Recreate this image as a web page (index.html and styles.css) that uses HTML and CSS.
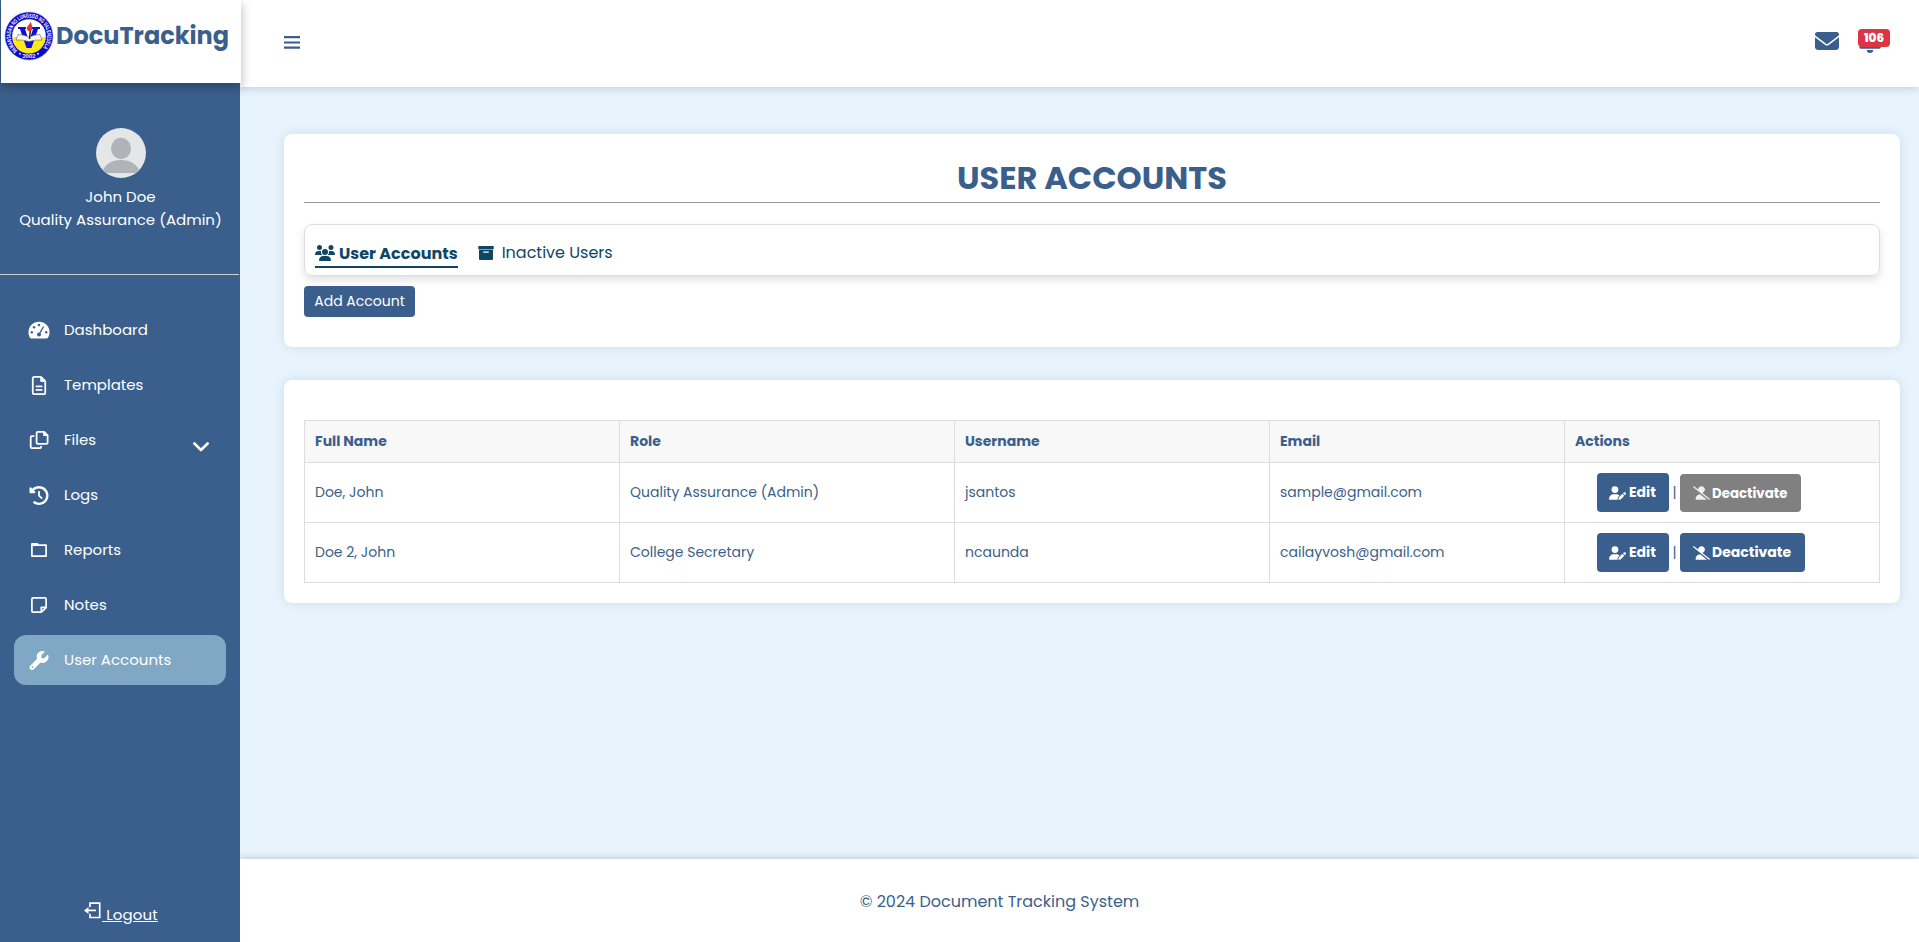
FILE: index.html
```html
<!DOCTYPE html>
<html lang="en">
<head>
<meta charset="utf-8">
<title>DocuTracking - User Accounts</title>
<link rel="stylesheet" href="styles.css">
</head>
<body>
<svg class="defs" aria-hidden="true">
  <symbol id="user-pen" viewBox="0 0 640 512"><path d="M224 256A128 128 0 1 0 224 0a128 128 0 1 0 0 256zm-45.700 48C79.800 304 0 383.800 0 482.300C0 498.700 13.300 512 29.700 512H322.800c-3.100-8.800-3.700-18.400-1.400-27.800l15-60.100c2.800-11.300 8.600-21.500 16.800-29.700l40.300-40.300c-32.100-31-75.700-50.100-123.900-50.100H178.300zm435.500-68.300c-15.600-15.600-40.900-15.600-56.600 0l-29.400 29.400 71 71 29.400-29.400c15.600-15.600 15.600-40.900 0-56.600l-14.400-14.400zM375.900 417c-4.100 4.100-7 9.200-8.400 14.900l-15 60.100c-1.400 5.500 .2 11.200 4.200 15.200s9.700 5.600 15.200 4.200l60.100-15c5.600-1.400 10.800-4.300 14.900-8.400L576.100 358.700l-71-71L375.900 417z"/></symbol>
  <symbol id="user-slash" viewBox="0 0 640 512"><path d="M38.800 5.100C28.400-3.100 13.300-1.200 5.100 9.200S-1.200 34.700 9.200 42.900l592 464c10.400 8.200 25.500 6.300 33.700-4.100s6.300-25.500-4.100-33.700L353.300 251.600C407.900 237 448 187.200 448 128C448 57.300 390.700 0 320 0C250.200 0 193.500 55.800 192 125.200L38.800 5.100zM264.300 304.300C170.500 309.400 96 387.200 96 482.300c0 16.400 13.300 29.700 29.700 29.700H514.300c3.900 0 7.600-.7 11-2.100l-261-205.600z"/></symbol>
</svg>
<div class="app">
  <aside class="sidebar">
    <div class="brand">
      <svg class="seal" viewBox="0 0 50 50">
        <circle cx="25" cy="25" r="24.500" fill="#c9cbd6"/>
        <circle cx="25" cy="25" r="23.800" fill="#0b0bd0"/>
        <path id="ring" d="M13.600 39.300A18.300 18.300 0 1 1 36.400 39.300" fill="none"/>
        <text class="seal-ring"><textPath href="#ring" textLength="86" lengthAdjust="spacingAndGlyphs">PAMANTASAN NG LUNGSOD NG VALENZUELA</textPath></text>
        <circle cx="25" cy="25" r="16.800" fill="#fff"/>
        <path d="M8.500 26a16.500 16.500 0 0 0 33 0z" fill="#ffe81a"/>
        <path d="M14 16h8v2h-1l4 12 4-12h-1v-2h8v2h-2l-6.500 19h-5L16 18h-2z" fill="#1010d0"/>
        <path d="M14 23.500q6 0 11 2.500 5-2.500 11-2.500l2 5.500q-7-.5-13 1.500-6-2-13-1.500z" fill="#f8f7ea" stroke="#666" stroke-width=".6"/>
        <path d="M25.500 28l1-10" stroke="#222" stroke-width="1.500"/>
        <path d="M23 18.500c-1-3 2-4 4-8 0 3 2 4 1 8-1 2-4 2-5 0z" fill="#e33b22"/>
        <circle cx="16" cy="42.800" r="1" fill="#fff04a"/><circle cx="34" cy="42.800" r="1" fill="#fff04a"/>
        <text x="25" y="47" class="seal-year">2002</text>
      </svg>
      <span class="brand-name">DocuTracking</span>
    </div>
    <div class="profile">
      <svg class="avatar" viewBox="0 0 50 50"><clipPath id="round"><circle cx="25" cy="25" r="25"/></clipPath><g clip-path="url(#round)"><path fill="#e4e6e7" d="M0 0h50v50H0z"/><ellipse cx="25" cy="20.500" rx="10" ry="10.700" fill="#aeb4b8"/><path fill="#aeb4b8" d="M6 45c2-9 10-13 19-13s17 4 19 13z"/></g></svg>
      <div>John Doe</div>
      <div>Quality Assurance (Admin)</div>
    </div>
    <nav class="nav">
      <a class="item"><svg viewBox="0 0 22 18"><path fill="#fff" d="M11 .8C5.200.8.500 5.500.500 11.200c0 1.900.5 3.700 1.400 5.200.4.600 1 1 1.700 1h14.800c.7 0 1.300-.4 1.700-1 .9-1.500 1.400-3.300 1.400-5.200C21.500 5.500 16.800.8 11 .8z"/><g fill="#3b5f8c"><circle cx="11" cy="4" r="1.200"/><circle cx="6" cy="6.200" r="1.200"/><circle cx="3.800" cy="11.200" r="1.200"/><circle cx="18.200" cy="11.200" r="1.200"/><circle cx="11" cy="13.500" r="2"/></g><path d="M11.300 13L15.300 6" stroke="#3b5f8c" stroke-width="1.400" stroke-linecap="round"/></svg><span>Dashboard</span></a>
      <a class="item"><svg viewBox="-64 0 512 512" class="fa"><path fill="#fff" d="M64 464c-8.800 0-16-7.200-16-16V64c0-8.800 7.200-16 16-16H224v80c0 17.700 14.300 32 32 32h80V448c0 8.800-7.200 16-16 16H64zM64 0C28.700 0 0 28.700 0 64V448c0 35.300 28.700 64 64 64H320c35.300 0 64-28.700 64-64V154.500c0-17-6.700-33.300-18.700-45.300L274.700 18.700C262.700 6.700 246.500 0 229.500 0H64zm56 256c-13.300 0-24 10.700-24 24s10.700 24 24 24H264c13.300 0 24-10.700 24-24s-10.700-24-24-24H120zm0 96c-13.300 0-24 10.700-24 24s10.700 24 24 24H264c13.300 0 24-10.700 24-24s-10.700-24-24-24H120z"/></svg><span>Templates</span></a>
      <a class="item"><svg viewBox="0 0 22 20"><g fill="none" stroke="#fff" stroke-width="1.800" stroke-linejoin="round"><path d="M9.800 1.900h6.400l3.400 3.400v7.400q0 1.200-1.200 1.200H9.800q-1.200 0-1.200-1.200V3.100q0-1.200 1.200-1.200z"/><path d="M6.300 6.200H3.900q-1.200 0-1.200 1.200v9.500q0 1.200 1.200 1.200h8q1.200 0 1.200-1.200v-.8"/></g><path fill="#fff" d="M15.200 1.500v4.600h4.700z"/></svg><span>Files</span><svg class="chev" viewBox="0 0 16 10"><path d="M1.400 1.500L8 8l6.600-6.500" fill="none" stroke="#fff" stroke-width="2.600" stroke-linecap="round" stroke-linejoin="round"/></svg></a>
      <a class="item"><svg viewBox="0 0 512 512" class="fa"><path fill="#fff" d="M75 75L41 41C25.900 25.900 0 36.600 0 57.900V168c0 13.300 10.700 24 24 24H134.100c21.400 0 32.100-25.900 17-41l-30.800-30.800C155 85.500 203 64 256 64c106 0 192 86 192 192s-86 192-192 192c-40.800 0-78.600-12.700-109.700-34.400c-14.500-10.100-34.400-6.600-44.600 7.900s-6.600 34.400 7.900 44.600C151.200 495 201.700 512 256 512c141.400 0 256-114.600 256-256S397.400 0 256 0C185.300 0 121.300 28.700 75 75zm181 53c-13.300 0-24 10.700-24 24V256c0 6.400 2.500 12.500 7 17l72 72c9.400 9.400 24.600 9.400 33.900 0s9.400-24.600 0-33.900l-65-65V152c0-13.300-10.700-24-24-24z"/></svg><span>Logs</span></a>
      <a class="item"><svg viewBox="0 0 22 20"><path d="M3.900 5.100v11h14.200V5.100zM3.900 5.100V3.900h5.400l1.200 1.200" fill="none" stroke="#fff" stroke-width="1.700" stroke-linejoin="round"/></svg><span>Reports</span></a>
      <a class="item"><svg viewBox="0 0 22 20"><path d="M5 2.900h12q1.100 0 1.100 1.100v8.700l-4.700 4.500H5q-1.100 0-1.100-1.100V4q0-1.100 1.100-1.100zM18 12.300h-4.700v4.700" fill="none" stroke="#fff" stroke-width="1.700" stroke-linejoin="round"/></svg><span>Notes</span></a>
      <a class="item active"><svg viewBox="0 0 512 512" class="fa"><path fill="#fff" d="M352 320c88.400 0 160-71.600 160-160c0-15.300-2.200-30.100-6.200-44.200c-3.100-10.800-16.400-13.200-24.300-5.300l-76.800 76.800c-3 3-7.100 4.700-11.300 4.700H336c-8.800 0-16-7.200-16-16V118.600c0-4.200 1.700-8.300 4.700-11.300l76.800-76.800c7.900-7.900 5.400-21.200-5.300-24.300C382.100 2.200 367.300 0 352 0C263.600 0 192 71.600 192 160c0 19.100 3.400 37.500 9.500 54.500L19.900 396.100C7.200 408.800 0 426.100 0 444.100C0 481.600 30.400 512 67.900 512c18 0 35.300-7.200 48-19.900L297.500 310.500c17 6.200 35.400 9.500 54.500 9.500zM80 408a24 24 0 1 1 0 48 24 24 0 1 1 0-48z"/></svg><span>User Accounts</span></a>
    </nav>
    <a class="logout"><svg viewBox="0 0 17 17"><path d="M6 5V1.200h9.700v14.300H6v-3.700" fill="none" stroke="#fff" stroke-width="1.700"/><path d="M4 8.400h8" stroke="#fff" stroke-width="1.700"/><path fill="#fff" d="M0 8.400l4.500-3.500v7z"/></svg><span class="logout-text">&nbsp;Logout</span></a>
  </aside>
  <div class="page">
    <header class="topbar">
      <svg class="menu" viewBox="0 0 16 14"><path d="M0 2.200h16M0 7.500h16M0 12.700h16" stroke="#3b5f8c" stroke-width="2.200"/></svg>
      <div class="tools">
        <svg class="mail" viewBox="0 64 512 384" preserveAspectRatio="none"><path fill="#3b5f8c" d="M48 64C21.500 64 0 85.500 0 112c0 15.100 7.100 29.300 19.200 38.400L236.800 313.600c11.400 8.500 27 8.500 38.400 0L492.800 150.400c12.100-9.100 19.200-23.300 19.200-38.400c0-26.500-21.500-48-48-48H48zM0 176V384c0 35.300 28.700 64 64 64H448c35.300 0 64-28.700 64-64V176L294.400 339.200c-22.800 17.100-54 17.100-76.800 0L0 176z"/></svg>
        <div class="alerts">
          <svg viewBox="0 0 22 24"><path fill="#3b5f8c" d="M11 0c1 0 1.500.7 1.500 1.600C16 2.300 18.300 5 18.300 9c0 4.500 1 6.500 3 8.500.9 1 .4 2.300-.9 2.300H1.600C.3 19.800-.2 18.500.7 17.500c2-2 3-4 3-8.500 0-4 2.300-6.700 5.800-7.400C9.500.7 10 0 11 0zM7.800 21h6.400a3.200 3 0 0 1-6.400 0z"/></svg>
          <span class="badge">106</span>
        </div>
      </div>
    </header>
    <main class="content">
      <section class="card intro">
        <h1>USER ACCOUNTS</h1>
        <div class="tabs">
          <a class="tab current"><svg viewBox="0 0 640 512"><path d="M144 0a80 80 0 1 1 0 160A80 80 0 1 1 144 0zM512 0a80 80 0 1 1 0 160A80 80 0 1 1 512 0zM0 298.700C0 239.800 47.800 192 106.700 192h42.700c15.900 0 31 3.500 44.600 9.700c-1.300 7.200-1.900 14.700-1.900 22.300c0 38.200 16.800 72.500 43.300 96H21.300C9.600 320 0 310.400 0 298.700zM404.600 320c26.600-23.500 43.300-57.800 43.300-96c0-7.600-.7-15-1.900-22.300c13.600-6.300 28.700-9.700 44.600-9.700h42.700C592.200 192 640 239.800 640 298.700c0 11.800-9.600 21.300-21.300 21.300H404.600zM224 224a96 96 0 1 1 192 0 96 96 0 1 1 -192 0zM128 485.300C128 411.700 187.700 352 261.300 352H378.700C452.300 352 512 411.700 512 485.300c0 14.700-11.900 26.700-26.700 26.700H154.700c-14.700 0-26.700-11.900-26.700-26.700z"/></svg><span>User Accounts</span></a>
          <a class="tab"><svg viewBox="0 0 16 16"><path fill-rule="evenodd" d="M.3 1h15.400v3.200H.3zM1 4.700h14V14q0 1-1 1H2q-1 0-1-1zM5.200 6.500v1.300h5.600V6.500z"/></svg><span>Inactive Users</span></a>
        </div>
        <button class="add">Add Account</button>
      </section>
      <section class="card list">
        <table>
          <colgroup><col class="c-name"><col class="c-role"><col class="c-user"><col class="c-mail"><col></colgroup>
          <thead><tr><th>Full Name</th><th>Role</th><th>Username</th><th>Email</th><th>Actions</th></tr></thead>
          <tbody>
            <tr><td>Doe, John</td><td>Quality Assurance (Admin)</td><td>jsantos</td><td>sample@gmail.com</td>
              <td><div class="actions"><a class="btn edit"><svg><use href="#user-pen"/></svg>Edit</a><span class="bar">|</span><a class="btn off disabled"><svg><use href="#user-slash"/></svg>Deactivate</a></div></td></tr>
            <tr><td>Doe 2, John</td><td>College Secretary</td><td>ncaunda</td><td>cailayvosh@gmail.com</td>
              <td><div class="actions"><a class="btn edit"><svg><use href="#user-pen"/></svg>Edit</a><span class="bar">|</span><a class="btn off"><svg><use href="#user-slash"/></svg>Deactivate</a></div></td></tr>
          </tbody>
        </table>
      </section>
    </main>
    <footer class="footer">© 2024 Document Tracking System</footer>
  </div>
</div>
</body>
</html>
```
FILE: styles.css
```css
* { box-sizing: border-box; }
body {
  margin: 0;
  font: 16px/24px Poppins, Inter, sans-serif;
  color: #3b5f8c;
  background: #e7f4fd;
}
.defs { position: absolute; width: 0; height: 0; }
.app { display: flex; height: 942px; overflow: hidden; }

/* Sidebar */
.sidebar {
  position: relative;
  z-index: 2;
  width: 240px;
  flex: none;
  display: flex;
  flex-direction: column;
  background: #3b5f8c;
  color: #fff;
  font-size: 15px;
}
.brand {
  width: 240px;
  height: 83px;
  flex: none;
  margin-left: 1px;
  padding: 10px 0 0 3px;
  display: flex;
  align-items: flex-start;
  background: #fff;
  box-shadow: 0 4px 10px rgba(0, 0, 0, .3);
}
.seal { width: 50px; height: 50px; margin-top: 1px; flex: none; }
.seal-year { font: 700 5px Inter, sans-serif; fill: #fff; text-anchor: middle; }
.seal-ring { font: 700 6px "Liberation Sans", sans-serif; fill: #fff; }
.brand-name {
  margin: 8px 0 0 2px;
  font-size: 24px;
  line-height: 36px;
  font-weight: 700;
  color: #3b5f8c;
}
.profile {
  width: 239px;
  height: 192px;
  padding: 45px 0 0 2px;
  text-align: center;
  line-height: 23px;
  border-bottom: 1px solid #cfcfcf;
}
.avatar { display: block; width: 50px; height: 50px; margin: 0 auto 7px; }
.nav { padding: 30px 14px 0; display: flex; flex-direction: column; gap: 5px; }
.item {
  height: 50px;
  padding: 0 17px 0 14px;
  display: flex;
  align-items: center;
  border-radius: 12px;
}
.item svg { width: 22px; height: 20px; margin-right: 14px; flex: none; }
.item svg.fa { height: 19px; }
.item .chev { width: 16px; height: 10px; margin: 13px 0 0 auto; }
.active { background: #80a7c3; }
.logout { margin: auto 0 17px 84px; display: flex; height: 24px; }
.logout svg { width: 17px; height: 17px; margin: 1px 1px 0 0; }
.logout-text { text-decoration: underline; margin-top: 2px; letter-spacing: .15px; }

/* Page frame */
.page { flex: 1; min-width: 0; display: flex; flex-direction: column; }
.topbar {
  position: relative;
  height: 87px;
  flex: none;
  padding: 0 29px 0 44px;
  display: flex;
  justify-content: space-between;
  background: #fff;
  box-shadow: 0 2px 8px rgba(0, 0, 0, .14);
}
.menu { width: 16px; height: 14px; margin-top: 35px; }
.tools { display: flex; gap: 19px; }
.mail { width: 24px; height: 18px; margin-top: 32px; }
.alerts { position: relative; width: 32px; padding: 29px 0 0 1px; }
.alerts svg { display: block; width: 22px; height: 24px; }
.badge {
  position: absolute;
  left: 0;
  top: 29px;
  width: 32px;
  height: 18px;
  border-radius: 4px;
  background: #dc3545;
  color: #fff;
  font-size: 12px;
  line-height: 18px;
  font-weight: 800;
  text-align: center;
}
.content { flex: 1; padding: 47px 19px 0 44px; }
.card {
  padding: 0 20px;
  border-radius: 8px;
  background: #fff;
  box-shadow: 0 0 12px rgba(0, 0, 0, .1);
}
.intro { height: 213px; }
.list { height: 223px; margin-top: 33px; padding-top: 40px; }
h1 {
  margin: 0 0 21px;
  padding-top: 20px;
  height: 69px;
  font-size: 32px;
  line-height: 48px;
  font-weight: 700;
  text-align: center;
  border-bottom: 1px solid #999;
}
.tabs {
  height: 52px;
  padding: 15px 10px 0;
  display: flex;
  align-items: flex-start;
  gap: 20px;
  color: #0f4665;
  border: 1px solid #ddd;
  border-radius: 8px;
  box-shadow: 0 4px 8px rgba(0, 0, 0, .12);
}
.tab { display: flex; }
.tab svg { width: 16px; height: 16px; margin: 5px 8px 0 0; fill: #0f4665; }
.tab span { margin-top: 1px; }
.current { height: 28px; font-weight: 700; border-bottom: 2px solid #0f4665; }
.current svg { width: 20px; margin-right: 4px; }
.current span { margin-top: 2px; }
.add {
  display: block;
  width: 111px;
  height: 31px;
  margin-top: 10px;
  padding: 0 0 1px;
  border: 0;
  border-radius: 4px;
  background: #3b5f8c;
  color: #fff;
  font: 14px/30px Poppins, Inter, sans-serif;
}

/* Accounts table */
table {
  width: 1576px;
  table-layout: fixed;
  border-collapse: collapse;
  font-size: 14px;
  line-height: 21px;
}
.c-name { width: 315px; }
.c-role { width: 335px; }
.c-user { width: 315px; }
.c-mail { width: 295px; }
th, td { padding: 0 10px; border: 1px solid #ddd; text-align: left; }
th { height: 42px; background: #f8f8f8; font-weight: 700; }
td { height: 60px; }
.actions { display: flex; align-items: center; padding-left: 22px; }
.btn {
  display: flex;
  align-items: center;
  height: 39px;
  border-radius: 4px;
  background: #3b5f8c;
  color: #fff;
  font-weight: 700;
  padding-left: 12px;
}
.btn svg { height: 14px; width: 17px; margin-right: 3px; fill: #fff; flex: none; }
.edit { width: 72px; }
.off { width: 125px; padding-left: 13px; }
.off svg { margin-right: 2px; }
.disabled { width: 121px; height: 38px; margin-top: 1px; background: #808080; font-size: 13.333px; }
.disabled svg { opacity: .88; }
.bar { width: 11px; text-align: center; }

.footer {
  position: relative;
  height: 83px;
  flex: none;
  padding: 31px 160px 0 0;
  text-align: center;
  background: #fff;
  box-shadow: 0 -2px 6px rgba(0, 0, 0, .14);
}
```
